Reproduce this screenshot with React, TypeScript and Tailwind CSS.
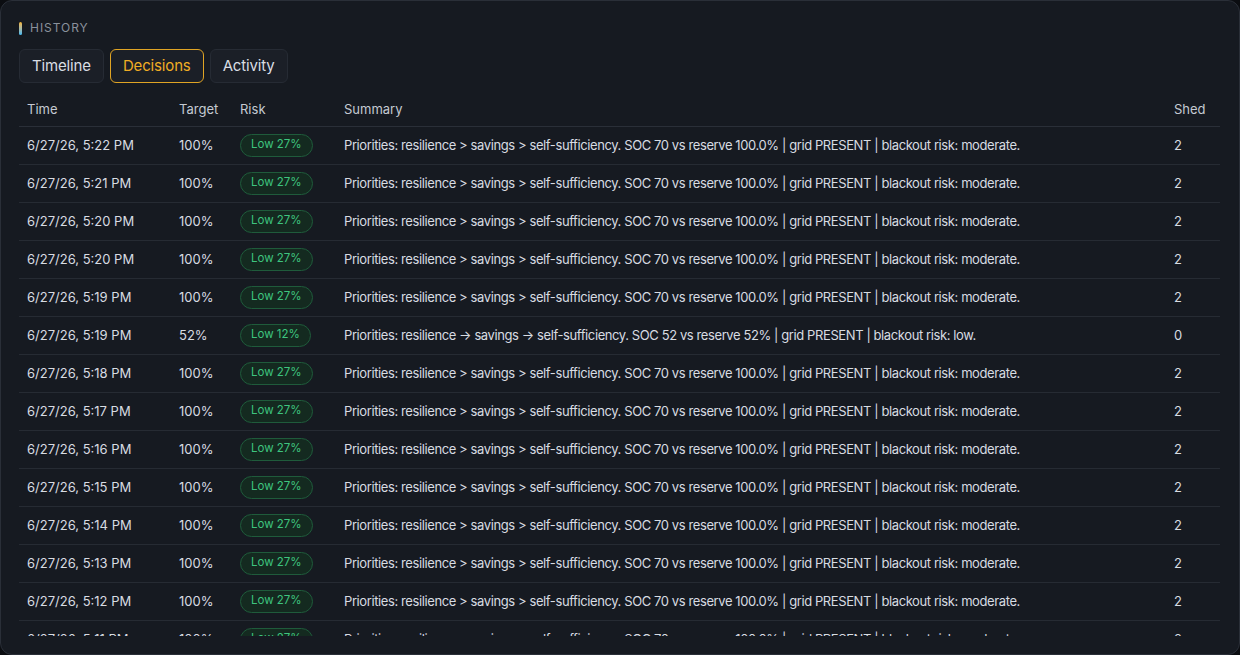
import { useState } from 'react';

type Decision = {
  time: string;
  target: string;
  risk: string;
  summary: string;
  shed: number;
};

const STD = 'Priorities: resilience > savings > self-sufficiency. SOC 70 vs reserve 100.0% | grid PRESENT | blackout risk: moderate.';

const rows: Decision[] = [
  { time: '6/27/26, 5:22 PM', target: '100%', risk: 'Low 27%', summary: STD, shed: 2 },
  { time: '6/27/26, 5:21 PM', target: '100%', risk: 'Low 27%', summary: STD, shed: 2 },
  { time: '6/27/26, 5:20 PM', target: '100%', risk: 'Low 27%', summary: STD, shed: 2 },
  { time: '6/27/26, 5:20 PM', target: '100%', risk: 'Low 27%', summary: STD, shed: 2 },
  { time: '6/27/26, 5:19 PM', target: '100%', risk: 'Low 27%', summary: STD, shed: 2 },
  {
    time: '6/27/26, 5:19 PM',
    target: '52%',
    risk: 'Low 12%',
    summary: 'Priorities: resilience → savings → self-sufficiency. SOC 52 vs reserve 52% | grid PRESENT | blackout risk: low.',
    shed: 0,
  },
  { time: '6/27/26, 5:18 PM', target: '100%', risk: 'Low 27%', summary: STD, shed: 2 },
  { time: '6/27/26, 5:17 PM', target: '100%', risk: 'Low 27%', summary: STD, shed: 2 },
  { time: '6/27/26, 5:16 PM', target: '100%', risk: 'Low 27%', summary: STD, shed: 2 },
  { time: '6/27/26, 5:15 PM', target: '100%', risk: 'Low 27%', summary: STD, shed: 2 },
  { time: '6/27/26, 5:14 PM', target: '100%', risk: 'Low 27%', summary: STD, shed: 2 },
  { time: '6/27/26, 5:13 PM', target: '100%', risk: 'Low 27%', summary: STD, shed: 2 },
  { time: '6/27/26, 5:12 PM', target: '100%', risk: 'Low 27%', summary: STD, shed: 2 },
  { time: '6/27/26, 5:11 PM', target: '100%', risk: 'Low 27%', summary: STD, shed: 2 },
  { time: '6/27/26, 5:10 PM', target: '100%', risk: 'Low 27%', summary: STD, shed: 2 },
];

const TABS = ['Timeline', 'Decisions', 'Activity'];

export default function App() {
  const [tab, setTab] = useState('Decisions');

  return (
    <div className="h-[655px] w-[1240px] bg-[#0b0d11] font-['Inter',sans-serif]">
      <div className="h-[655px] rounded-xl border border-[#2a2f38] bg-[#161a21] px-[18px] pt-[18px]">
        {/* 헤더 */}
        <div className="flex items-center gap-2">
          <span className="h-[13px] w-[3px] rounded-full bg-gradient-to-b from-[#f5b324] to-[#38b6f0]" />
          <span className="text-[12px] uppercase tracking-[0.08em] text-[#8a919c]">History</span>
        </div>

        {/* 탭 */}
        <div className="mt-[12px] flex gap-[6px]">
          {TABS.map(t => (
            <button
              key={t}
              onClick={() => setTab(t)}
              className={`h-[34px] rounded-md border px-3 text-[15px] tracking-[-0.01em] ${
                tab === t
                  ? 'border-[#e0a424] text-[#f0ad24] bg-[#1b1f27]'
                  : 'border-[#262b34] text-[#d9dde3] bg-[#1b1f27]'
              }`}
            >
              {t}
            </button>
          ))}
        </div>

        {/* 테이블 */}
        <div className="mt-[9px] h-[544px] overflow-hidden pr-[1px]">
          <table className="w-full table-fixed border-collapse text-left text-[13px]">
            <colgroup>
              <col className="w-[152px]" />
              <col className="w-[61px]" />
              <col className="w-[104px]" />
              <col />
              <col className="w-[54px]" />
            </colgroup>
            <thead>
              <tr className="h-[34px] border-b border-[#2a2f38] text-[#c5cad2]">
                <th className="px-2 pt-[2px] font-normal">Time</th>
                <th className="px-2 pt-[2px] font-normal">Target</th>
                <th className="px-2 pt-[2px] font-normal">Risk</th>
                <th className="px-2 pt-[2px] font-normal">Summary</th>
                <th className="px-2 pt-[2px] font-normal">Shed</th>
              </tr>
            </thead>
            <tbody>
              {rows.map((r, i) => (
                <tr key={i} className="h-[38px] border-b border-[#262b33] text-[#d8dce2]">
                  <td className="px-2 pt-[1px] whitespace-nowrap">{r.time}</td>
                  <td className="px-2 pt-[1px]">{r.target}</td>
                  <td className="px-2">
                    <span className="inline-flex h-[23px] items-center rounded-full border border-[#1f5b3b] bg-[#142a20] px-[10px] text-[11.5px] text-[#3ec47f]">
                      {r.risk}
                    </span>
                  </td>
                  <td className="px-2 pt-[1px] whitespace-nowrap tracking-[-0.4px]">{r.summary}</td>
                  <td className="px-2 pt-[1px]">{r.shed}</td>
                </tr>
              ))}
            </tbody>
          </table>
        </div>
      </div>
    </div>
  );
}
